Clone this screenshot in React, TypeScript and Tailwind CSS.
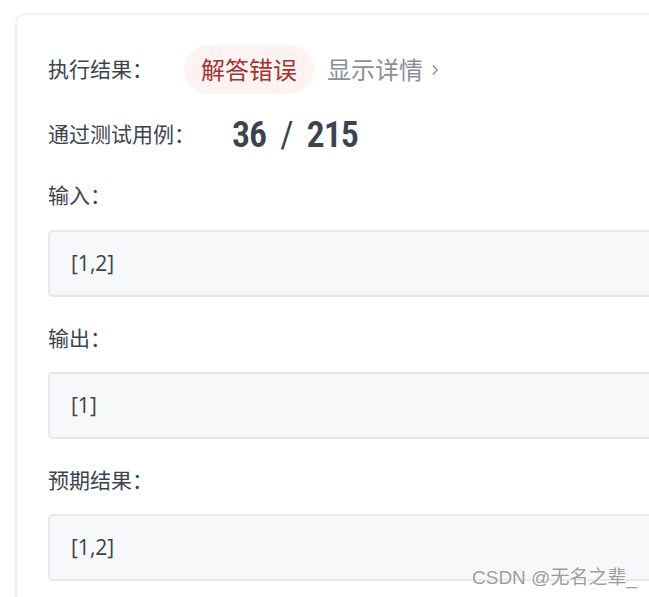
import React from "react";

const cjk = "font-['Noto_Sans','Noto_Sans_CJK_SC',sans-serif]";

function Label({ text, className = "" }: { text: string; className?: string }) {
  return (
    <div className={`h-[30px] flex items-center text-[21px] leading-[30px] text-[#3c4350] ${className}`}>
      {text}
    </div>
  );
}

function ValueBox({ value, className = "" }: { value: string; className?: string }) {
  return (
    <div
      className={`h-[67px] flex items-center pl-[21px] rounded-[5px] border-2 border-[#e6e8eb] bg-[#f7f8fa] text-[21px] text-[#3c4350] font-['Open_Sans',sans-serif] ${className}`}
    >
      {value}
    </div>
  );
}

export default function App() {
  return (
    <div className={`relative w-[649px] h-[597px] overflow-hidden bg-white ${cjk}`}>
      <div className="ml-[15px] mt-[13px] w-[700px] h-[640px] rounded-tl-[10px] border-2 border-[#f1f1f2] pl-[31px] pt-[30px]">
        {/* 执行结果 */}
        <div className="h-[49px] flex items-center">
          <span className="w-[136px] text-[21px] text-[#3c4350]">执行结果：</span>
          <span className="h-[49px] flex items-center px-[17px] rounded-full bg-[#fdf3f3] text-[24px] text-[#a8302e]">
            解答错误
          </span>
          <span className="ml-[13px] flex items-center text-[24px] text-[#8a8f99]">
            显示详情
            <svg className="ml-[5px] w-[14px] h-[14px]" viewBox="0 0 24 24" fill="none" stroke="currentColor" strokeWidth={2.6} strokeLinecap="round" strokeLinejoin="round">
              <path d="M9 5l7 7-7 7" />
            </svg>
          </span>
        </div>

        {/* 通过测试用例 */}
        <div className="mt-[16px] h-[50px] flex items-center">
          <span className="w-[184px] text-[21px] text-[#3c4350]">通过测试用例：</span>
          <span className="flex items-center gap-[14px] text-[36px] font-semibold text-[#3c4350] font-['Roboto',sans-serif] tracking-[-1px] [font-stretch:condensed]">
            <span>36</span>
            <span className="font-normal">/</span>
            <span>215</span>
          </span>
        </div>

        <Label text="输入：" className="mt-[20px]" />
        <ValueBox value="[1,2]" className="mt-[20px]" />

        <Label text="输出：" className="mt-[26px]" />
        <ValueBox value="[1]" className="mt-[19px]" />

        <Label text="预期结果：" className="mt-[26px]" />
        <ValueBox value="[1,2]" className="mt-[19px]" />
      </div>

      <div className="absolute left-[472px] top-[565px] text-[19px] leading-[26px] text-[#9c9c9c] font-['Liberation_Sans','Noto_Sans_CJK_SC',sans-serif] [text-shadow:0_0_2px_#fff,0_0_2px_#fff]">
        CSDN @无名之辈_
      </div>
    </div>
  );
}
